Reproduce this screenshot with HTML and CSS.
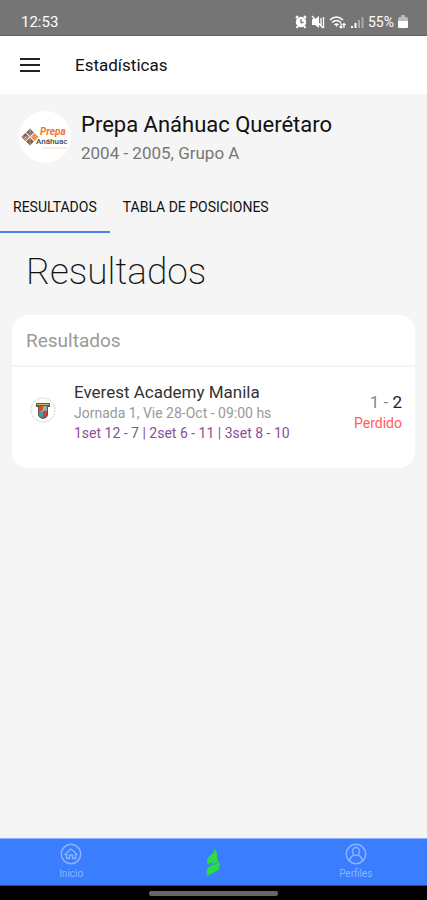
FILE: index.html
```html
<!DOCTYPE html>
<html lang="es">
<head>
    <meta charset="UTF-8">
    <meta name="viewport" content="width=device-width, initial-scale=1.0">
    <title>Estadísticas</title>
    <link rel="stylesheet" href="styles.css">
</head>
<body>
    <div class="status-bar">
        <span>12:53</span>
        <div class="status-icons">
            <svg width="12" height="14" viewBox="0 0 12 14" fill="#fff">
                <path d="M1 3l2-2M11 3L9 1M3 11l-1.500 2M9 11l1.500 2" stroke="#fff" stroke-width="2"/>
                <circle cx="6" cy="7" r="5.200"/>
                <path d="M6 4v3.500h2.500" fill="none" stroke="#757575" stroke-width="1.300"/>
            </svg>
            <svg width="14" height="14" viewBox="0 0 14 14" fill="#fff">
                <path d="M1 4h3l4-3v12L4 10H1z"/>
                <path d="M10 3v7M12.500 2v11M1 1l11 12" stroke="#fff" stroke-width="1.300"/>
            </svg>
            <svg width="17" height="14" viewBox="0 0 17 14" fill="none" stroke="#fff" stroke-width="1.500">
                <path d="M1 5q6.500-6 13 0M3 7.500q4.500-4 9 0M5.500 10q2-2 4 0"/>
                <path d="M7.500 9.500v2M12 8v5M10.500 11.500L12 13l1.500-1.500M15 13V9M13.500 10L15 8.500l1.500 1.500" stroke-width="1.200"/>
            </svg>
            <svg width="14" height="14" viewBox="0 0 14 14" fill="#fff">
                <path d="M1 11h2v2H1zM4.500 8h2v5h-2z"/>
                <path d="M8 5h2v8H8zM11.500 2h2v11h-2z" opacity=".4"/>
            </svg>
            <span>55%</span>
            <svg width="10" height="14" viewBox="0 0 10 14" fill="#fff">
                <path d="M3 0h4v2h1q2 0 2 2v2H0V4q0-2 2-2h1z" opacity=".5"/>
                <path d="M0 6h10v6q0 1-1 1H1q-1 0-1-1z"/>
            </svg>
        </div>
    </div>

    <header class="toolbar">
        <button class="menu-button" type="button" aria-label="Menú">
            <svg width="20" height="14" viewBox="0 0 20 14" stroke="#222" stroke-width="2">
                <path d="M0 1h20M0 7h20M0 13h20"/>
            </svg>
        </button>
        <h1>Estadísticas</h1>
    </header>

    <main>
        <section class="team">
            <div class="team-logo">
                <svg width="52" height="52" viewBox="0 0 52 52">
                    <g transform="rotate(45 11 26)">
                        <rect x="5" y="20" width="5.500" height="5.500" fill="#777072"/>
                        <rect x="11.500" y="20" width="5.500" height="5.500" fill="#f28a4b"/>
                        <rect x="5" y="26.500" width="5.500" height="5.500" fill="#66656b"/>
                        <rect x="11.500" y="26.500" width="5.500" height="5.500" fill="#75605a"/>
                        <path d="M7.500 28.500h3v3h-3z" fill="#f28a4b"/>
                        <path d="M5 20l12 12M17 20L5 32" stroke="#f7b48c" stroke-width=".6"/>
                    </g>
                    <text class="logo-script" x="21" y="24">Prepa</text>
                    <text class="logo-name" x="17" y="33">Anáhuac</text>
                    <path d="M24 37h24" stroke="#fbd5c3" stroke-width="1"/>
                </svg>
            </div>
            <div>
                <h2 class="team-name">Prepa Anáhuac Querétaro</h2>
                <p class="team-group">2004 - 2005, Grupo A</p>
            </div>
        </section>

        <nav class="tabs">
            <button class="tab active" type="button">RESULTADOS</button>
            <button class="tab" type="button">TABLA DE POSICIONES</button>
        </nav>

        <h2 class="page-title">Resultados</h2>

        <section class="card">
            <h3 class="card-header">Resultados</h3>
            <div class="match">
                <svg class="rival-logo" width="26" height="26" viewBox="0 0 26 26">
                    <circle cx="13" cy="13" r="12" fill="#fff" stroke="#ccc" stroke-dasharray="2 1"/>
                    <path d="M6 6h14v4h-2v8q-1 3-5 4-4-1-5-4v-8H6z" fill="#5d574a"/>
                    <path d="M9 9h4v5H9z" fill="#e2463f"/>
                    <path d="M13 9h4v5h-4z" fill="#7fb5b8"/>
                    <path d="M9 14h4v7q-3-1-4-3z" fill="#3e9cb0"/>
                    <path d="M13 14h4v4q-1 2-4 3z" fill="#d83c35"/>
                    <path d="M7 7.500h12M11 15l5-5" stroke="#d8b86c"/>
                </svg>
                <div class="match-info">
                    <div class="rival">Everest Academy Manila</div>
                    <div class="date">Jornada 1, Vie 28-Oct - 09:00 hs</div>
                    <div class="sets">1set 12 - 7 | 2set 6 - 11 | 3set 8 - 10</div>
                </div>
                <div class="result">
                    <div class="score">1 - <span class="winner">2</span></div>
                    <div class="outcome">Perdido</div>
                </div>
            </div>
        </section>
    </main>

    <nav class="bottom-nav">
        <a href="#inicio">
            <svg width="22" height="22" viewBox="0 0 22 22" fill="none" stroke="currentColor" stroke-width="1.500">
                <circle cx="11" cy="11" r="9.700"/>
                <path d="M4.500 12L11 6l6.500 6M6.500 11v4.500h3V12h3v3.500h3V11" stroke-linejoin="round"/>
            </svg>
            <span>Inicio</span>
        </a>
        <a href="#principal" aria-label="Principal">
            <svg width="14" height="28" viewBox="0 0 14 28" fill="#2bdc43">
                <path d="M8 0q4 5 3 9 0 3-4 5-4 1-5 3-2-4 0-7 1-2 4-4 3-2 2-6z"/>
                <path d="M13 13q2 7-2 10-3 1-6 3l-4 2q-1-6 1-8 1-2 5-3 4-1 6-4z"/>
                <path d="M11 9q2 4-1 6l-5 2 2-3q3-2 4-5z"/>
            </svg>
        </a>
        <a href="#perfiles">
            <svg width="22" height="22" viewBox="0 0 22 22" fill="none" stroke="currentColor" stroke-width="1.500">
                <circle cx="11" cy="11" r="9.700"/>
                <ellipse cx="11" cy="8.500" rx="3.500" ry="4"/>
                <path d="M5 18v-2q1-3 4-4M17 18v-2q-1-3-4-4"/>
            </svg>
            <span>Perfiles</span>
        </a>
    </nav>
    <div class="gesture-bar"><div class="gesture-handle"></div></div>
</body>
</html>
```
FILE: styles.css
```css
* {
    box-sizing: border-box;
}
body {
    margin: 0;
    min-height: 100vh;
    display: flex;
    flex-direction: column;
    background: #f5f5f5;
    color: #111;
    font-family: Roboto, "Liberation Sans", sans-serif;
}
h1, h2, h3, p {
    margin: 0;
    font-weight: 400;
}
button {
    padding: 0;
    border: none;
    background: none;
    color: inherit;
    font-family: inherit;
    cursor: pointer;
}
svg {
    display: block;
    flex-shrink: 0;
}
.status-bar {
    height: 36px;
    padding: 8px 19px 0 21px;
    display: flex;
    justify-content: space-between;
    align-items: center;
    background: #757575;
    border-bottom: 1px solid #606060;
    color: #fff;
    font-size: 15px;
}
.status-icons {
    display: flex;
    align-items: center;
    gap: 4px;
    font-size: 14px;
}
.toolbar {
    height: 58px;
    padding: 0 20px;
    display: flex;
    align-items: center;
    gap: 35px;
    background: #fff;
}
.toolbar h1 {
    font-size: 17px;
}
main {
    flex: 1;
}
.team {
    padding: 17px 19px 16px;
    display: flex;
    align-items: flex-start;
    gap: 10px;
}
.team-logo {
    border-radius: 50%;
    background: #fff;
}
.logo-script {
    fill: #f2762e;
    font-size: 10px;
    font-style: italic;
    font-weight: 700;
}
.logo-name {
    fill: #4c4444;
    font-size: 8px;
    font-weight: 500;
}
.team-name {
    font-size: 22px;
    line-height: 28px;
}
.team-group {
    color: #777;
    font-size: 17px;
    line-height: 28px;
}
.tabs {
    display: flex;
}
.tab {
    height: 50px;
    padding: 0 13px;
    border-bottom: 2px solid transparent;
    font-size: 14px;
}
.tab.active {
    border-bottom-color: #4a83ef;
}
.page-title {
    padding: 16px 26px 20px;
    font-size: 37px;
    font-weight: 200;
    line-height: 46px;
}
.card {
    margin: 0 12px;
    border-radius: 16px;
    background: #fff;
}
.card-header {
    padding: 14px 14px 12px;
    border-bottom: 2px solid #f4f4f4;
    color: #999;
    font-size: 19px;
    line-height: 24px;
}
.match {
    padding: 15px 13px 23px 18px;
    display: flex;
    align-items: center;
    gap: 18px;
}
.rival-logo {
    align-self: flex-start;
    margin-top: 15px;
}
.match-info {
    flex: 1;
}
.rival {
    color: #333;
    font-size: 17px;
    line-height: 21px;
}
.date, .sets, .outcome {
    font-size: 14px;
    line-height: 20px;
}
.date {
    color: #999;
}
.sets {
    color: #8d4d99;
}
.result {
    text-align: right;
}
.score {
    color: #888;
    font-size: 17px;
    line-height: 21px;
}
.winner {
    color: #222;
}
.outcome {
    color: #ff5c5c;
}
.match-info, .result {
    padding-bottom: 2px;
}
.bottom-nav {
    height: 48px;
    display: grid;
    grid-template-columns: repeat(3, 1fr);
    background: #3b7dff;
    border-top: 1px solid #8bb3ff;
    border-bottom: 1px solid #1749a8;
}
.bottom-nav a {
    display: flex;
    flex-direction: column;
    align-items: center;
    justify-content: center;
    gap: 2px;
    color: #8bb3ff;
    text-decoration: none;
    font-size: 10px;
    line-height: 14px;
}
.gesture-bar {
    height: 14px;
    display: flex;
    align-items: center;
    justify-content: center;
    background: #000;
}
.gesture-handle {
    width: 30%;
    height: 5px;
    border-radius: 2px;
    background: #666;
}
```
